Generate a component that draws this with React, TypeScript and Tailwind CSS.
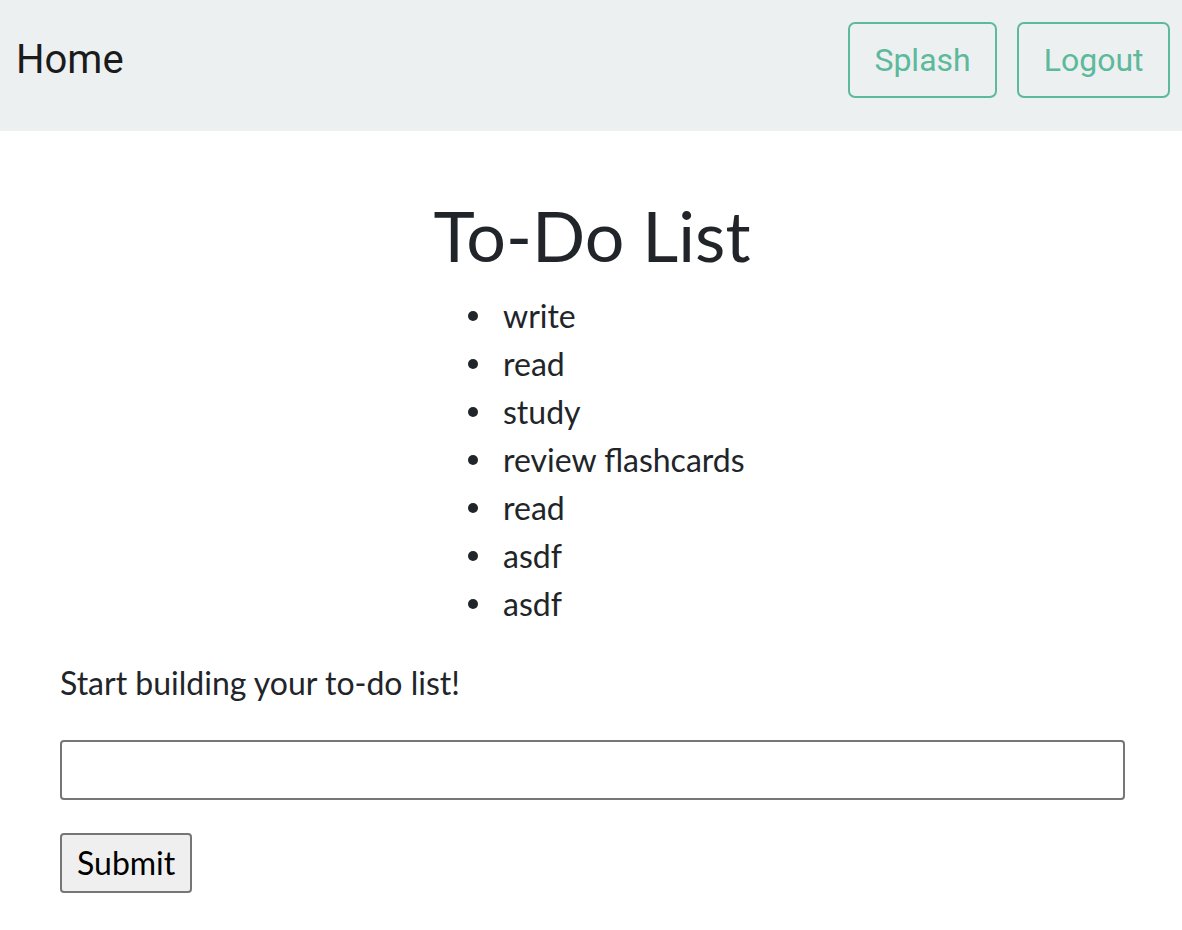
import React from 'react'

const items = ['write', 'read', 'study', 'review flashcards', 'read', 'asdf', 'asdf']

export default function App() {
  return (
    <div className="min-h-[930px] bg-white text-[#212529]" style={{ fontFamily: 'Lato, "Noto Sans", sans-serif' }}>
      <nav className="h-[131px] bg-[#ecf0f1] flex items-start justify-between pt-[22px] pl-4 pr-3" style={{ fontFamily: 'Roboto, sans-serif' }}>
        <span className="text-[40px] leading-[76px] text-[#1b1b1b]">Home</span>
        <div className="flex gap-[20px]">
          <NavButton label="Splash" />
          <NavButton label="Logout" />
        </div>
      </nav>

      <main className="px-[60px]">
        <h1 className="text-center text-[70px] leading-none mt-[69px] ml-[2px]">To-Do List</h1>
        <ul className="w-fit ml-[408px] mt-[22px] text-[32px] leading-[48px]">
          {items.map((item, i) => (
            <li key={i} className="flex items-center">
              <span className="w-[10px] h-[10px] rounded-full bg-[#212529] mr-[25px]" />
              {item}
            </li>
          ))}
        </ul>
        <p className="text-[32px] leading-[48px] mt-[31px]">Start building your to-do list!</p>
        <form className="mt-[33px] flex flex-col items-start gap-[33px]" onSubmit={(e) => e.preventDefault()}>
          <input type="text" className="w-[1065px] h-[60px] border-2 border-[#767676] rounded-[4px] bg-white" />
          <button type="submit" className="h-[60px] px-[15px] bg-[#efefef] border-2 border-[#767676] rounded-[4px] text-[32px] text-black">
            Submit
          </button>
        </form>
      </main>
    </div>
  )
}

function NavButton({ label }: { label: string }) {
  return (
    <button className="h-[76px] px-[24.5px] border-2 border-[#5cb99a] rounded-[7px] text-[32px] text-[#5cb99a] bg-transparent">
      {label}
    </button>
  )
}
